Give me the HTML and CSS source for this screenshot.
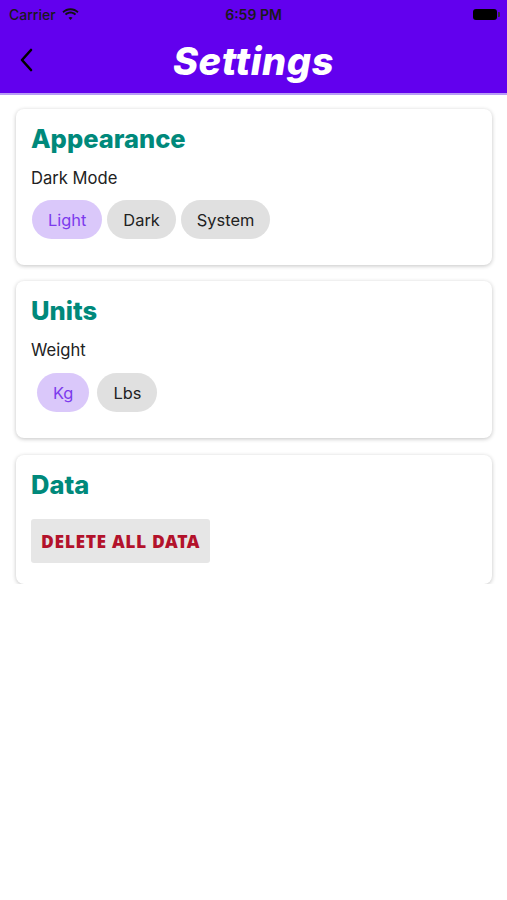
FILE: index.html
```html
<!DOCTYPE html>
<html>
<head>
<meta charset="utf-8">
<link rel="stylesheet" href="styles.css">
</head>
<body>
<div class="top">
  <div class="status">
    <div class="status-left">
      <span class="carrier">Carrier</span>
      <svg class="wifi" width="17" height="12" viewBox="0 0 17 12"><path d="M8.5 2.2c2.6 0 5 1 6.8 2.7l1.3-1.4C14.4 1.4 11.6.2 8.5.2S2.6 1.4.4 3.5l1.3 1.4C3.5 3.2 5.9 2.2 8.5 2.2z" fill="#111"/><path d="M8.5 5.6c1.6 0 3.1.6 4.3 1.7l1.3-1.4C12.6 4.5 10.6 3.6 8.5 3.6S4.4 4.5 2.9 5.9l1.3 1.4c1.2-1.1 2.7-1.7 4.3-1.7z" fill="#111"/><path d="M8.5 8.9c.8 0 1.5.3 2 .8l-2 2.2-2-2.2c.5-.5 1.2-.8 2-.8z" fill="#111"/></svg>
    </div>
    <div class="time">6:59 PM</div>
    <div class="status-right">
      <div class="battery"></div>
    </div>
  </div>
  <div class="nav">
    <svg class="back" width="14" height="24" viewBox="0 0 14 24"><path d="M12 2L3 12l9 10" fill="none" stroke="#000" stroke-width="2.6" stroke-linecap="round" stroke-linejoin="round"/></svg>
    <h1 class="title">Settings</h1>
  </div>
</div>
<main class="content">
  <section class="card">
    <h2 class="card-title">Appearance</h2>
    <div class="label">Dark Mode</div>
    <div class="chips">
      <span class="chip chip-active">Light</span>
      <span class="chip">Dark</span>
      <span class="chip">System</span>
    </div>
  </section>
  <section class="card">
    <h2 class="card-title">Units</h2>
    <div class="label">Weight</div>
    <div class="chips chips-units">
      <span class="chip chip-active">Kg</span>
      <span class="chip">Lbs</span>
    </div>
  </section>
  <section class="card card-data">
    <h2 class="card-title">Data</h2>
    <button class="danger">DELETE ALL DATA</button>
  </section>
</main>
</body>
</html>
```
FILE: styles.css
```css
* { box-sizing: border-box; }
html, body { margin: 0; padding: 0; background: #fff; }
body { font-family: Inter, "Noto Sans", sans-serif; color: #222; width: 507px; }

.top { background: #6200ee; border-bottom: 2px solid #b89cf5; }
.status { height: 28px; display: flex; align-items: center; justify-content: space-between; padding: 0 10px 0 9px; position: relative; }
.status-left { display: flex; align-items: center; gap: 6px; width: 120px; }
.carrier { font-size: 14px; color: #1a1a1a; font-weight: 500; }
.time { font-size: 14px; font-weight: 600; color: #1a1a1a; position: absolute; left: 0; right: 0; text-align: center; top: 6px; }
.status-right { width: 120px; display: flex; justify-content: flex-end; }
.battery { width: 24px; height: 11px; border-radius: 3px; background: #000; position: relative; }
.battery::after { content: ""; position: absolute; right: -3px; top: 3px; width: 2px; height: 5px; background: #333; border-radius: 0 1px 1px 0; }

.nav { height: 65px; display: flex; align-items: center; justify-content: center; position: relative; }
.back { position: absolute; left: 19px; top: 20px; }
.title { margin: 0; color: #fff; font-size: 38px; font-weight: 800; font-style: italic; letter-spacing: 0.6px; }

.content { padding: 14px 15px 0 16px; display: flex; flex-direction: column; gap: 16px; }
.card { background: #fff; border-radius: 8px; box-shadow: 0 1px 4px rgba(0,0,0,0.24); padding: 14px 15px 26px 15px; }
.card-title { margin: 0; color: #00897b; font-size: 25.5px; font-weight: 800; line-height: 32px; }
.label { font-size: 16.6px; margin-top: 13px; line-height: 20px; color: #222; }
.chips { display: flex; gap: 5px; margin-top: 12px; padding-left: 1px; }
.chips-units { gap: 8px; padding-left: 6px; margin-top: 13px; }
.chip { height: 39px; display: inline-flex; align-items: center; padding: 0 16px; border-radius: 20px; background: #e0e0e0; font-size: 16.4px; color: #222; }
.chip-active { background: #dac8fa; color: #7c3aed; }

.card-data { padding-bottom: 21px; margin-top: 1px; }
.danger { display: block; margin-top: 18px; border: none; background: #e6e6e6; border-radius: 3px; height: 44px; padding: 0 10px; font-family: "Noto Sans", Inter, sans-serif; font-weight: 900; font-size: 17.5px; color: #b3122b; letter-spacing: 0.6px; }
```
